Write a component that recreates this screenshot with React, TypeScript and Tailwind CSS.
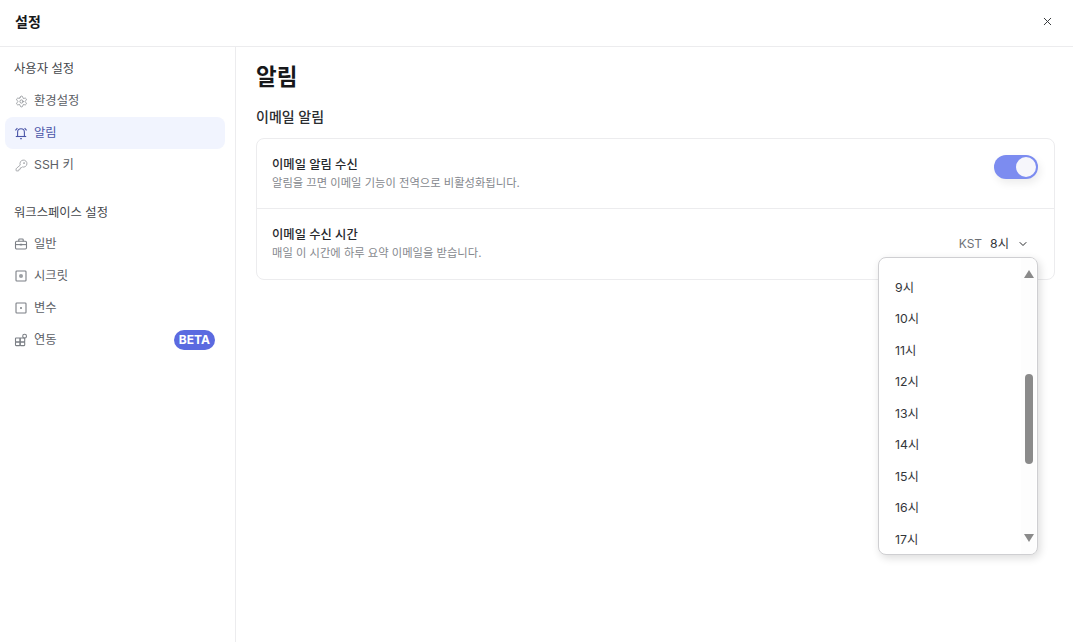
import { useState } from "react";
import { X, ChevronDown, Settings, KeyRound } from "lucide-react";

const FONT = "font-['Inter','Noto_Sans_CJK_KR',sans-serif]";

const HOURS = ["9시", "10시", "11시", "12시", "13시", "14시", "15시", "16시", "17시"];

function BellIcon() {
  return (
    <svg width="14" height="14" viewBox="0 0 14 14" fill="none" stroke="currentColor" strokeWidth="1.1">
      <path d="M3.6 10.2V6.2a3.4 3.4 0 0 1 6.8 0v4" />
      <path d="M1.8 10.5h10.4" />
      <path d="M1.4 4.4 3.4 2.2M12.6 4.4l-2-2.2" />
      <path d="M6.2 12.6h1.6" />
    </svg>
  );
}

function CaseIcon() {
  return (
    <svg width="14" height="14" viewBox="0 0 14 14" fill="none" stroke="currentColor" strokeWidth="1.1">
      <rect x="1.5" y="4.2" width="11" height="7.8" rx="1.2" />
      <path d="M4.8 4.2V2.8a.8.8 0 0 1 .8-.8h2.8a.8.8 0 0 1 .8.8v1.4" />
      <path d="M1.5 7.6h11" />
      <rect x="5.8" y="6.8" width="2.4" height="1.6" fill="currentColor" stroke="none" />
    </svg>
  );
}

function SecretIcon() {
  return (
    <svg width="14" height="14" viewBox="0 0 14 14" fill="none" stroke="currentColor" strokeWidth="1.1">
      <rect x="2" y="2" width="10" height="10" rx="0.8" />
      <circle cx="7" cy="7" r="2" fill="currentColor" stroke="none" opacity="0.75" />
    </svg>
  );
}

function VariableIcon() {
  return (
    <svg width="14" height="14" viewBox="0 0 14 14" fill="none" stroke="currentColor" strokeWidth="1.1">
      <rect x="2" y="2" width="10" height="10" rx="0.8" />
      <circle cx="7" cy="7" r="1" fill="currentColor" stroke="none" />
    </svg>
  );
}

function LinkIcon() {
  return (
    <svg width="14" height="14" viewBox="0 0 14 14" fill="none" stroke="currentColor" strokeWidth="1.1">
      <rect x="1.5" y="5" width="4.6" height="4" rx="0.6" />
      <rect x="1.5" y="9" width="4.6" height="3.6" rx="0.6" />
      <rect x="6.1" y="5" width="4.6" height="4" rx="0.6" />
      <rect x="6.1" y="9" width="4.6" height="3.6" rx="0.6" />
      <circle cx="10.6" cy="3.2" r="1.9" />
    </svg>
  );
}

function NavItem({
  icon,
  label,
  active,
  badge
}: {
  icon: React.ReactNode;
  label: string;
  active?: boolean;
  badge?: string;
}) {
  return (
    <div
      className={`flex h-8 items-center gap-[6px] rounded-lg pl-[9px] pr-[10px] text-[12.3px] ${
        active ? "bg-[#f1f4fe] text-[#4a55a8]" : "text-[#5c6066]"
      }`}
    >
      <span className={`flex w-[14px] justify-center ${active ? "text-[#4a55a8]" : "text-[#7b7f85]"}`}>{icon}</span>
      <span>{label}</span>
      {badge && (
        <span className="ml-auto flex h-[20px] items-center rounded-full bg-[#5b6ae0] px-[5px] text-[12px] font-bold text-white">
          {badge}
        </span>
      )}
    </div>
  );
}

export default function App() {
  const [on, setOn] = useState(true);

  return (
    <div className={`flex h-[642px] w-[1073px] flex-col overflow-hidden bg-white text-[#1b1d20] ${FONT}`}>
      <header className="flex h-[47px] shrink-0 items-center justify-between border-b border-[#ececee] pb-[3px] pl-[15px] pr-[19px]">
        <h1 className="text-[14px] font-bold text-[#17181a]">설정</h1>
        <X size={13} strokeWidth={1.8} className="text-[#33363a]" />
      </header>

      <div className="flex min-h-0 flex-1">
        <aside className="w-[236px] shrink-0 border-r border-[#ececee] pl-[5px] pr-[10px] pt-[7px]">
          <div className="flex h-[30px] items-center pl-[9px] text-[12.3px] text-[#44474c]">사용자 설정</div>
          <div className="mt-[1px] flex flex-col">
            <NavItem icon={<Settings size={13} strokeWidth={1.3} />} label="환경설정" />
            <NavItem icon={<BellIcon />} label="알림" active />
            <NavItem icon={<KeyRound size={13} strokeWidth={1.2} />} label="SSH 키" />
          </div>
          <div className="mt-[17px] flex h-[30px] items-center pl-[9px] text-[12.3px] text-[#44474c]">
            워크스페이스 설정
          </div>
          <div className="flex flex-col">
            <NavItem icon={<CaseIcon />} label="일반" />
            <NavItem icon={<SecretIcon />} label="시크릿" />
            <NavItem icon={<VariableIcon />} label="변수" />
            <NavItem icon={<LinkIcon />} label="연동" badge="BETA" />
          </div>
        </aside>

        <main className="min-w-0 flex-1 pl-[20px] pr-[18px] pt-[14px]">
          <h2 className="text-[22.5px] leading-[32px] font-bold text-[#17181a]">알림</h2>
          <h3 className="mt-[13px] text-[14px] leading-[22px] font-medium text-[#2a2c30]">이메일 알림</h3>

          <section className="mt-[10px] rounded-lg border border-[#ececee]">
            <div className="flex h-[70px] items-center justify-between border-b border-[#ececee] pl-[15px] pr-[16px]">
              <div>
                <div className="text-[12.3px] leading-[18px] font-medium text-[#26282c]">이메일 알림 수신</div>
                <div className="text-[11.3px] leading-[18px] text-[#85888e]">
                  알림을 끄면 이메일 기능이 전역으로 비활성화됩니다.
                </div>
              </div>
              <button
                type="button"
                onClick={() => setOn(!on)}
                className="mb-[14px] flex h-6 w-11 items-center justify-end rounded-full bg-[#7c8cf0] pr-[2px] shadow-[2px_4px_8px_rgba(0,0,0,0.08)]"
              >
                <span className="h-5 w-5 rounded-full bg-[#f6f6fb]" />
              </button>
            </div>

            <div className="relative flex h-[70px] items-center justify-between pl-[15px] pr-[25px]">
              <div>
                <div className="text-[12.3px] leading-[18px] font-medium text-[#26282c]">이메일 수신 시간</div>
                <div className="text-[11.3px] leading-[18px] text-[#85888e]">매일 이 시간에 하루 요약 이메일을 받습니다.</div>
              </div>
              <div className="flex items-center text-[12.3px]">
                <span className="text-[12px] text-[#6e7176]">KST</span>
                <span className="ml-[8px] text-[#33363a]">8시</span>
                <ChevronDown size={12} strokeWidth={2} className="ml-[8px] text-[#26282c]" />
              </div>

              <div className="absolute right-[16px] top-[48px] flex h-[298px] w-[160px] overflow-hidden rounded-lg border border-[#cfcfd2] bg-white shadow-[2px_3px_8px_rgba(0,0,0,0.14)]">
                <ul className="flex-1 pl-[16px] pt-[14px]">
                  {HOURS.map((h) => (
                    <li key={h} className="flex h-[31.5px] items-center text-[12.3px] text-[#33363a]">
                      {h}
                    </li>
                  ))}
                </ul>
                <div className="mr-[1px] flex w-[15px] flex-col items-center bg-[#fdfdfd] pt-[12px]">
                  <span className="h-0 w-0 border-x-[5px] border-b-[8px] border-x-transparent border-b-[#8a8a8a]" />
                  <span className="mt-[96px] h-[90px] w-[8px] rounded-[4px] bg-[#8a8a8a]" />
                  <span className="mt-[70px] h-0 w-0 border-x-[5px] border-t-[8px] border-x-transparent border-t-[#8a8a8a]" />
                </div>
              </div>
            </div>
          </section>
        </main>
      </div>
    </div>
  );
}
